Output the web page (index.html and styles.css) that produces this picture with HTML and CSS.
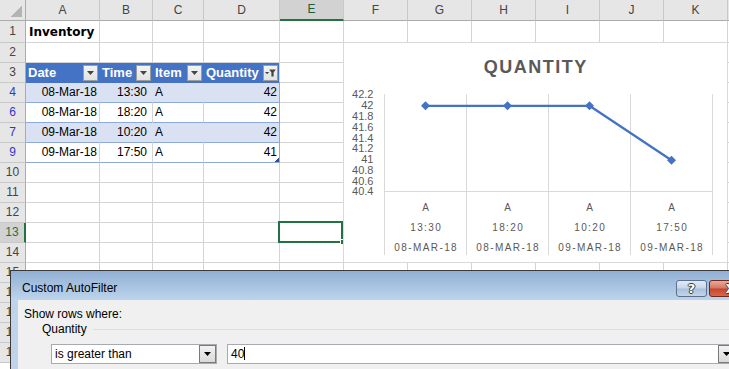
FILE: index.html
```html
<!DOCTYPE html>
<html>
<head>
<meta charset="utf-8">
<title>Inventory</title>
<link rel="stylesheet" href="styles.css">
</head>
<body>
<div class="sheet">
  <div class="row hdr">
    <span class="corner"></span><span>A</span><span>B</span><span>C</span><span>D</span><span class="sel">E</span><span>F</span><span>G</span><span>H</span><span>I</span><span>J</span><span>K</span><span></span>
  </div>
  <div class="row r1">
    <span class="rh">1</span><span class="ttl">Inventory</span><span></span><span></span><span></span><span></span><span></span><span></span><span></span><span></span><span></span><span></span><span></span>
  </div>
  <div class="row">
    <span class="rh">2</span><span></span><span></span><span></span><span></span><span></span><span></span><span></span><span></span><span></span><span></span><span></span><span></span>
  </div>
  <div class="row">
    <span class="rh">3</span>
    <span class="th">Date<span class="fb"><svg width="7" height="4" viewBox="0 0 7 4"><path d="M0 0h7L3.5 4z" fill="#444"/></svg></span></span>
    <span class="th">Time<span class="fb"><svg width="7" height="4" viewBox="0 0 7 4"><path d="M0 0h7L3.5 4z" fill="#444"/></svg></span></span>
    <span class="th">Item<span class="fb"><svg width="7" height="4" viewBox="0 0 7 4"><path d="M0 0h7L3.5 4z" fill="#444"/></svg></span></span>
    <span class="th thl">Quantity<span class="fb"><svg width="11" height="8" viewBox="0 0 11 8"><path d="M0 3h4.2L2.1 5.2z" fill="#444"/><path d="M4.2 0.5h6.6L8.6 3.4V7.6H6.4V3.4z" fill="#444"/></svg></span></span>
    <span></span><span></span><span></span><span></span><span></span><span></span><span></span><span></span>
  </div>
  <div class="row tr band">
    <span class="rh fl">4</span><span class="num">08-Mar-18</span><span class="tm">13:30</span><span class="txt">A</span><span class="num last">42</span><span></span><span></span><span></span><span></span><span></span><span></span><span></span><span></span>
  </div>
  <div class="row tr">
    <span class="rh fl">6</span><span class="num">08-Mar-18</span><span class="tm">18:20</span><span class="txt">A</span><span class="num last">42</span><span></span><span></span><span></span><span></span><span></span><span></span><span></span><span></span>
  </div>
  <div class="row tr band">
    <span class="rh fl">7</span><span class="num">09-Mar-18</span><span class="tm">10:20</span><span class="txt">A</span><span class="num last">42</span><span></span><span></span><span></span><span></span><span></span><span></span><span></span><span></span>
  </div>
  <div class="row tr">
    <span class="rh fl">9</span><span class="num">09-Mar-18</span><span class="tm">17:50</span><span class="txt">A</span><span class="num last endc">41<i class="resize"></i></span><span></span><span></span><span></span><span></span><span></span><span></span><span></span><span></span>
  </div>
  <div class="row"><span class="rh">10</span><span></span><span></span><span></span><span></span><span></span><span></span><span></span><span></span><span></span><span></span><span></span><span></span></div>
  <div class="row"><span class="rh">11</span><span></span><span></span><span></span><span></span><span></span><span></span><span></span><span></span><span></span><span></span><span></span><span></span></div>
  <div class="row"><span class="rh">12</span><span></span><span></span><span></span><span></span><span></span><span></span><span></span><span></span><span></span><span></span><span></span><span></span></div>
  <div class="row"><span class="rh rsel">13</span><span></span><span></span><span></span><span></span><span class="active"><i class="selbox"></i><i class="handle"></i></span><span></span><span></span><span></span><span></span><span></span><span></span><span></span></div>
  <div class="row"><span class="rh">14</span><span></span><span></span><span></span><span></span><span></span><span></span><span></span><span></span><span></span><span></span><span></span><span></span></div>
  <div class="row"><span class="rh">15</span><span></span><span></span><span></span><span></span><span></span><span></span><span></span><span></span><span></span><span></span><span></span><span></span></div>
  <div class="row"><span class="rh">16</span><span></span><span></span><span></span><span></span><span></span><span></span><span></span><span></span><span></span><span></span><span></span><span></span></div>
  <div class="row"><span class="rh">17</span><span></span><span></span><span></span><span></span><span></span><span></span><span></span><span></span><span></span><span></span><span></span><span></span></div>
  <div class="row"><span class="rh">18</span><span></span><span></span><span></span><span></span><span></span><span></span><span></span><span></span><span></span><span></span><span></span><span></span></div>
  <div class="row"><span class="rh">19</span><span></span><span></span><span></span><span></span><span></span><span></span><span></span><span></span><span></span><span></span><span></span><span></span></div>
</div>

<div class="chart">
  <svg class="plot" width="383" height="219" viewBox="0 0 383 219">
    <text class="ctitle" x="191.8" y="29.5" text-anchor="middle">QUANTITY</text>
    <g class="grid">
      <line x1="40.5" y1="51" x2="40.5" y2="212"/>
      <line x1="122.5" y1="51" x2="122.5" y2="212"/>
      <line x1="204.5" y1="51" x2="204.5" y2="212"/>
      <line x1="286.5" y1="51" x2="286.5" y2="212"/>
      <line x1="368.5" y1="51" x2="368.5" y2="212"/>
      <line x1="40.5" y1="148.5" x2="368.5" y2="148.5"/>
    </g>
    <g class="ylab" text-anchor="end">
      <text x="29.5" y="55.4">42.2</text>
      <text x="29.5" y="66.2">42</text>
      <text x="29.5" y="77">41.8</text>
      <text x="29.5" y="87.7">41.6</text>
      <text x="29.5" y="98.5">41.4</text>
      <text x="29.5" y="109.3">41.2</text>
      <text x="29.5" y="120.1">41</text>
      <text x="29.5" y="130.8">40.8</text>
      <text x="29.5" y="141.6">40.6</text>
      <text x="29.5" y="152.4">40.4</text>
    </g>
    <polyline class="series" points="81.5,62.8 163.5,62.8 245.5,62.8 327.5,117.3"/>
    <g class="mk">
      <polygon points="81.5,58.3 86,62.8 81.5,67.3 77,62.8"/>
      <polygon points="163.5,58.3 168,62.8 163.5,67.3 159,62.8"/>
      <polygon points="245.5,58.3 250,62.8 245.5,67.3 241,62.8"/>
      <polygon points="327.5,112.8 332,117.3 327.5,121.8 323,117.3"/>
    </g>
    <g class="xlab" text-anchor="middle">
      <text x="82.2" y="167.5">A</text>
      <text x="164.2" y="167.5">A</text>
      <text x="246.2" y="167.5">A</text>
      <text x="328.2" y="167.5">A</text>
      <text x="82.2" y="188">13:30</text>
      <text x="164.2" y="188">18:20</text>
      <text x="246.2" y="188">10:20</text>
      <text x="328.2" y="188">17:50</text>
      <text x="82.2" y="208">08-MAR-18</text>
      <text x="164.2" y="208">08-MAR-18</text>
      <text x="246.2" y="208">09-MAR-18</text>
      <text x="328.2" y="208">09-MAR-18</text>
    </g>
  </svg>
</div>

<div class="dialog">
  <div class="titlebar">
    <span class="dtitle">Custom AutoFilter</span>
    <div class="tbtns">
      <span class="tb help">?</span>
      <span class="tb close">X</span>
    </div>
  </div>
  <div class="dbody">
    <div class="lead">Show rows where:</div>
    <div class="group"><span>Quantity</span><span class="gline"></span></div>
    <div class="crow">
      <div class="combo c1"><span class="ctext">is greater than</span><span class="cbtn"><svg width="7" height="4" viewBox="0 0 7 4"><path d="M0 0h7L3.5 4z" fill="#000"/></svg></span></div>
      <div class="combo c2"><span class="ctext">40<i class="caret"></i></span><span class="cbtn"><svg width="7" height="4" viewBox="0 0 7 4"><path d="M0 0h7L3.5 4z" fill="#000"/></svg></span></div>
    </div>
  </div>
</div>
</body>
</html>
```
FILE: styles.css
```css
* { box-sizing: border-box; margin: 0; padding: 0; }
html, body { width: 729px; height: 369px; overflow: hidden; background: #fff; }
body {
  position: relative;
  font-family: "Liberation Sans", Arial, sans-serif;
  font-size: 12px;
  color: #000;
}

/* ---------- sheet ---------- */
.sheet { display: flex; flex-direction: column; width: 792px; }
.row {
  display: grid;
  grid-template-columns: 26px 74px 53px 51px 76px repeat(8, 64px);
  height: 20px;
}
.row > * {
  display: block;
  position: relative;
  border-right: 1px solid #d4d4d4;
  border-bottom: 1px solid #d4d4d4;
  line-height: 19px;
  white-space: nowrap;
}
.row.r1 { height: 22px; }
.row.r1 > * { line-height: 21px; }

.row.hdr { height: 21px; }
.row.hdr > * {
  background: #e6e6e6;
  border-right-color: #c8c8c8;
  border-bottom-color: #ababab;
  text-align: center;
  color: #444;
  line-height: 20px;
}
.row.hdr .corner {
  border-right-color: #ababab;
  background-image: linear-gradient(135deg, transparent 50%, #b4b4b4 50%);
  background-size: 11px 11px;
  background-position: right 3px bottom 3px;
  background-repeat: no-repeat;
}
.row.hdr .sel {
  background-color: #d2d2d2;
  color: #1e5c35;
  border-bottom: 2px solid #217346;
  line-height: 19px;
}
.row .rh {
  background: #e6e6e6;
  border-right-color: #ababab;
  border-bottom-color: #c8c8c8;
  text-align: center;
  color: #444;
}
.row .rh.fl { color: #3434cc; }
.row .rh.rsel {
  background: #d2d2d2;
  color: #217346;
  border-right: 2px solid #217346;
}

.row.r1 > .ttl {
  font-family: "DejaVu Sans", sans-serif;
  font-weight: bold;
  font-size: 12px;
  padding: 2px 0 0 3px;
  line-height: 19px;
  color: #000;
}

/* table header */
.row .th {
  background: #4472c4;
  border-right-color: #4472c4;
  border-bottom-color: #4472c4;
  color: #fff;
  font-weight: bold;
  font-size: 13px;
  display: flex;
  align-items: center;
  justify-content: space-between;
  padding: 0 1px 0 2px;
}
.row .th.thl { border-right-color: #d4d4d4; }
.fb {
  width: 15px;
  height: 16px;
  border: 1px solid #9c9c9c;
  background: linear-gradient(#f4f4f4, #e2e2e2);
  display: flex;
  align-items: center;
  justify-content: center;
}

/* table body */
.row.tr > .num, .row.tr > .tm, .row.tr > .txt { border-bottom-color: #8ea9db; }
.row.tr > .last { border-right-color: #8ea9db; }
.row.band > .num, .row.band > .tm, .row.band > .txt { background: #d9e1f2; }
.row.band > .num, .row.band > .tm, .row.band > .txt { border-right-color: #d9e1f2; }
.row.band > .last { border-right-color: #8ea9db; }
.num { text-align: right; padding-right: 2px; }
.tm { text-align: right; padding-right: 5px; }
.txt { padding-left: 2px; }
.resize {
  position: absolute;
  right: 0;
  bottom: 0;
  width: 4px;
  height: 4px;
  background: linear-gradient(135deg, transparent 45%, #2f4f9f 45%);
}

/* active cell */
.active .selbox {
  position: absolute;
  left: -2px;
  top: -2px;
  right: 0;
  bottom: -1px;
  border: 2px solid #217346;
}
.active .handle {
  position: absolute;
  right: -3px;
  bottom: -3px;
  width: 6px;
  height: 6px;
  background: #217346;
  border: 1px solid #fff;
}

/* ---------- chart ---------- */
.chart {
  position: absolute;
  left: 343px;
  top: 42px;
  width: 385px;
  height: 221px;
  background: #fff;
  border: 1px solid #d9d9d9;
}
.plot { display: block; }
.ctitle {
  font-family: "Liberation Sans", Arial, sans-serif;
  font-weight: bold;
  font-size: 18px;
  letter-spacing: 1.5px;
  fill: #595959;
}
.grid line { stroke: #d9d9d9; stroke-width: 1; }
.ylab text {
  font-family: "Liberation Sans", Arial, sans-serif;
  font-size: 11px;
  fill: #595959;
}
.xlab text {
  font-family: "Liberation Sans", Arial, sans-serif;
  font-size: 10px;
  letter-spacing: 1.4px;
  fill: #595959;
}
.series { fill: none; stroke: #4472c4; stroke-width: 2.25; stroke-linejoin: round; }
.mk polygon { fill: #4472c4; }

/* ---------- dialog ---------- */
.dialog {
  position: absolute;
  left: 10px;
  top: 270px;
  width: 750px;
  height: 130px;
  border-left: 1px solid #3a3a3a;
  border-top: 1px solid #3a3a3a;
  background: #bfd4ea;
}
.titlebar {
  height: 29px;
  background: linear-gradient(#91b0d4, #bdd4ec);
  display: flex;
  align-items: flex-start;
  padding: 9px 8px 0 11px;
}
.dtitle { font-size: 12px; line-height: 17px; color: #000; }
.tbtns { margin-left: auto; display: flex; gap: 2px; }
.tb {
  height: 17px;
  border-radius: 3px;
  display: flex;
  align-items: center;
  justify-content: center;
  font-family: "DejaVu Sans", sans-serif;
  font-weight: bold;
  font-size: 13px;
  line-height: 15px;
  color: #fff;
  text-shadow: -1px 0 #3a3a3a, 1px 0 #3a3a3a, 0 -1px #3a3a3a, 0 1px #3a3a3a;
}
.help {
  width: 31px;
  border: 1px solid #5d6f8c;
  background: linear-gradient(#e2eaf5 0%, #c6d6ea 48%, #a9c0dc 52%, #c2d5ec 100%);
}
.close {
  width: 43px;
  border: 1px solid #6e2a1f;
  background: linear-gradient(#eaa999 0%, #d6765e 48%, #c4452c 52%, #d9684b 100%);
}
.dbody {
  margin: 0 7px;
  height: 100px;
  background: #f0f0f0;
  padding: 7px 0 0 6px;
}
.lead { line-height: 15px; }
.group {
  display: flex;
  align-items: center;
  margin-left: 18px;
  line-height: 15px;
}
.gline { flex: 1; border-top: 1px solid #d5dfe5; margin-left: 6px; margin-top: -1px; }
.crow { display: flex; gap: 10px; margin: 7px 0 0 27px; }
.combo {
  height: 20px;
  background: #fff;
  border: 1px solid #a7abb0;
  display: flex;
  align-items: stretch;
}
.c1 { width: 166px; }
.c2 { width: 509px; }
.ctext { flex: 1; padding-left: 3px; line-height: 18px; white-space: nowrap; }
.caret {
  display: inline-block;
  width: 1px;
  height: 13px;
  background: #000;
  vertical-align: -2px;
}
.cbtn {
  width: 17px;
  border: 1px solid #7a7a7a;
  background: linear-gradient(#f2f2f2, #d9d9d9);
  display: flex;
  align-items: center;
  justify-content: center;
}
```
